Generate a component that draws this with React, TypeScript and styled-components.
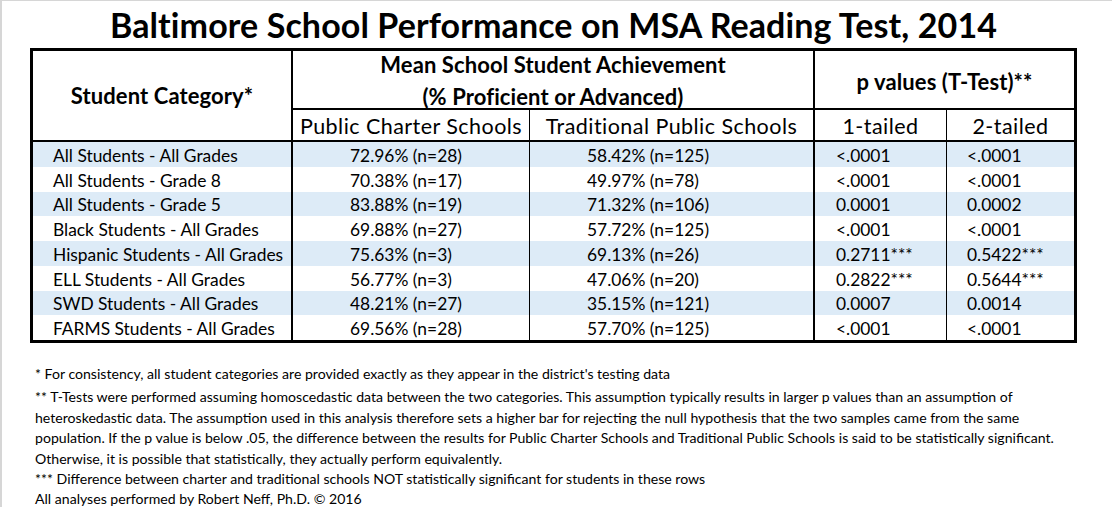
import React from "react";
import styled, { createGlobalStyle } from "styled-components";

const GlobalStyle = createGlobalStyle`
  html, body { margin: 0; padding: 0; background: #ffffff; }
  body { font-family: Lato, "Open Sans", sans-serif; color: #000000; }
`;

const Page = styled.div`
  width: 1112px;
  height: 507px;
  box-sizing: border-box;
  border-top: 1px solid #d6d6d6;
  border-left: 2px solid #d6d6d6;
  padding-left: 28px;
  overflow: hidden;
`;

const Title = styled.h1`
  margin: 0;
  width: 1047px;
  height: 47px;
  line-height: 47px;
  text-align: center;
  font-size: 34px;
  letter-spacing: 0.1px;
  font-weight: 700;
  white-space: nowrap;
`;

const Table = styled.div`
  width: 1047px;
  box-sizing: border-box;
  border: 3px solid #000;
  display: grid;
  grid-template-columns: 260px 237px 285px 132px 127px;
  grid-template-rows: 57px 34px repeat(8, 24.75px);
`;

type Edge = "none" | "thin" | "thick";
const edge = (e: Edge) => (e === "thick" ? "2px solid #000" : e === "thin" ? "1px solid #000" : "none");

const HeadCell = styled.div<{ $right: Edge; $span?: string; $rows?: string; $pad?: number }>`
  grid-column: ${(p) => p.$span || "auto"};
  grid-row: ${(p) => p.$rows || "auto"};
  border-right: ${(p) => edge(p.$right)};
  box-sizing: border-box;
  display: flex;
  flex-direction: column;
  align-items: center;
  justify-content: center;
  padding-top: ${(p) => p.$pad ?? 0}px;
  font-size: 22px;
  letter-spacing: 0.1px;
  font-weight: 700;
  line-height: 32px;
  white-space: nowrap;
`;

const CategoryHead = styled(HeadCell)`
  border-bottom: 2px solid #000;
`;

const SubHead = styled.div<{ $right: Edge }>`
  border-top: 2px solid #000;
  border-bottom: 2px solid #000;
  border-right: ${(p) => edge(p.$right)};
  box-sizing: border-box;
  display: flex;
  align-items: center;
  justify-content: center;
  padding-top: 2px;
  font-size: 21.5px;
  letter-spacing: 0.45px;
  white-space: nowrap;
`;

const Cell = styled.div<{ $right: Edge; $indent: number; $shade: boolean }>`
  border-right: ${(p) => edge(p.$right)};
  background: ${(p) => (p.$shade ? "#ddebf7" : "#ffffff")};
  box-sizing: border-box;
  display: flex;
  align-items: center;
  padding-left: ${(p) => p.$indent}px;
  padding-top: 2px;
  font-size: 17.4px;
  white-space: nowrap;
`;

const Notes = styled.div`
  margin-top: 21px;
  padding-left: 5px;
  font-size: 14.1px;
  line-height: 20.4px;
  white-space: nowrap;
`;

const Note = styled.div<{ $gap?: number }>`
  margin-top: ${(p) => p.$gap ?? 0}px;
`;

const rows: [string, string, string, string, string][] = [
  ["All Students - All Grades", "72.96% (n=28)", "58.42% (n=125)", "<.0001", "<.0001"],
  ["All Students - Grade 8", "70.38% (n=17)", "49.97% (n=78)", "<.0001", "<.0001"],
  ["All Students - Grade 5", "83.88% (n=19)", "71.32% (n=106)", "0.0001", "0.0002"],
  ["Black Students - All Grades", "69.88% (n=27)", "57.72% (n=125)", "<.0001", "<.0001"],
  ["Hispanic Students - All Grades", "75.63% (n=3)", "69.13% (n=26)", "0.2711***", "0.5422***"],
  ["ELL Students - All Grades", "56.77% (n=3)", "47.06% (n=20)", "0.2822***", "0.5644***"],
  ["SWD Students - All Grades", "48.21% (n=27)", "35.15% (n=121)", "0.0007", "0.0014"],
  ["FARMS Students - All Grades", "69.56% (n=28)", "57.70% (n=125)", "<.0001", "<.0001"],
];

const cols: { right: Edge; indent: number }[] = [
  { right: "thick", indent: 20 },
  { right: "thin", indent: 57 },
  { right: "thick", indent: 57 },
  { right: "thin", indent: 21 },
  { right: "none", indent: 20 },
];

export default function App() {
  return (
    <>
      <GlobalStyle />
      <Page>
        <Title>Baltimore School Performance on MSA Reading Test, 2014</Title>
        <Table>
          <CategoryHead $right="thick" $rows="1 / 3" $pad={1}>
            Student Category*
          </CategoryHead>
          <HeadCell $right="thick" $span="2 / 4" $pad={2}>
            <span>Mean School Student Achievement</span>
            <span>(% Proficient or Advanced)</span>
          </HeadCell>
          <HeadCell $right="none" $span="4 / 6" $pad={4}>
            p values (T-Test)**
          </HeadCell>
          <SubHead $right="thin">Public Charter Schools</SubHead>
          <SubHead $right="thick">Traditional Public Schools</SubHead>
          <SubHead $right="thin">1-tailed</SubHead>
          <SubHead $right="none">2-tailed</SubHead>
          {rows.map((r, i) =>
            r.map((v, j) => (
              <Cell key={`${i}-${j}`} $right={cols[j].right} $indent={cols[j].indent} $shade={i % 2 === 0}>
                {v}
              </Cell>
            ))
          )}
        </Table>
        <Notes>
          <Note>* For consistency, all student categories are provided exactly as they appear in the district's testing data</Note>
          <Note $gap={3}>** T-Tests were performed assuming homoscedastic data between the two categories. This assumption typically results in larger p values than an assumption of</Note>
          <Note>heteroskedastic data. The assumption used in this analysis therefore sets a higher bar for rejecting the null hypothesis that the two samples came from the same</Note>
          <Note>population. If the p value is below .05, the difference between the results for Public Charter Schools and Traditional Public Schools is said to be statistically significant.</Note>
          <Note>Otherwise, it is possible that statistically, they actually perform equivalently.</Note>
          <Note>*** Difference between charter and traditional schools NOT statistically significant for students in these rows</Note>
          <Note>All analyses performed by Robert Neff, Ph.D. © 2016</Note>
        </Notes>
      </Page>
    </>
  );
}
